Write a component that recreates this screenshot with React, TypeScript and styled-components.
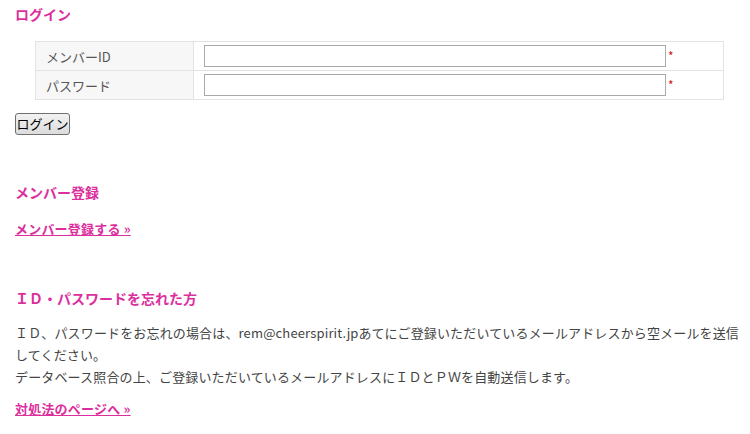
import React from 'react';
import styled, { createGlobalStyle } from 'styled-components';

const GlobalStyle = createGlobalStyle`
  body {
    margin: 0;
    background: #ffffff;
    font-family: "Noto Sans CJK JP", "Noto Sans", sans-serif;
    color: #333333;
  }
`;

const PINK = '#dc2f9e';

const Page = styled.div`
  padding: 4px 4px 0 15px;
`;

const Heading = styled.h3<{ $top: number }>`
  margin: ${p => p.$top}px 0 0 0;
  font-size: 14px;
  line-height: 20px;
  font-weight: bold;
  color: ${PINK};
`;

const FormTable = styled.table`
  margin: 17px 0 0 20px;
  width: 689px;
  border-collapse: collapse;
  font-size: 13px;
`;

const LabelCell = styled.th`
  width: 147px;
  padding: 0 0 0 10px;
  text-align: left;
  font-weight: normal;
  color: #555555;
  background: #f7f7f7;
  border: 1px solid #e3e3e3;
`;

const FieldCell = styled.td`
  padding: 0 0 0 10px;
  border: 1px solid #e3e3e3;
`;

const Row = styled.tr`
  height: 29px;
`;

const Field = styled.div`
  display: flex;
  align-items: center;
`;

const TextInput = styled.input`
  box-sizing: border-box;
  width: 462px;
  height: 22px;
  margin: 0;
  border: 1px solid #a9a9a9;
  background: #ffffff;
`;

const Required = styled.span`
  margin-left: 2px;
  color: #d01010;
  font-size: 12px;
  line-height: 12px;
  align-self: flex-start;
  padding-top: 5px;
`;

const LoginButton = styled.button`
  display: block;
  margin: 13px 0 0 0;
  box-sizing: border-box;
  width: 55px;
  height: 22px;
  padding: 0;
  font-family: "Noto Sans CJK JP", sans-serif;
  font-size: 13px;
  line-height: 18px;
  color: #000000;
  background: linear-gradient(#f2f2f2, #dcdcdc);
  border: 1px solid #707070;
  border-radius: 3px;
`;

const MoreLink = styled.a<{ $top: number }>`
  display: block;
  width: fit-content;
  margin-top: ${p => p.$top}px;
  font-size: 13px;
  line-height: 20px;
  font-weight: bold;
  letter-spacing: 0.2px;
  color: ${PINK};
  text-decoration: underline;
`;

const Para = styled.p`
  margin: 14px 0 0 0;
  font-size: 13px;
  line-height: 22px;
  letter-spacing: 0.15px;
  color: #444444;
`;

const App: React.FC = () => {
  return (
    <>
      <GlobalStyle />
      <Page>
        <Heading $top={0}>ログイン</Heading>
        <FormTable>
          <tbody>
            <Row>
              <LabelCell>メンバーID</LabelCell>
              <FieldCell>
                <Field>
                  <TextInput type="text" />
                  <Required>*</Required>
                </Field>
              </FieldCell>
            </Row>
            <Row>
              <LabelCell>パスワード</LabelCell>
              <FieldCell>
                <Field>
                  <TextInput type="password" />
                  <Required>*</Required>
                </Field>
              </FieldCell>
            </Row>
          </tbody>
        </FormTable>
        <LoginButton>ログイン</LoginButton>

        <Heading $top={47}>メンバー登録</Heading>
        <MoreLink $top={17} href="#">メンバー登録する »</MoreLink>

        <Heading $top={49}>ＩＤ・パスワードを忘れた方</Heading>
        <Para>
          ＩＤ、パスワードをお忘れの場合は、rem@cheerspirit.jpあてにご登録いただいているメールアドレスから空メールを送信してください。
          <br />
          データベース照合の上、ご登録いただいているメールアドレスにＩＤとＰＷを自動送信します。
        </Para>
        <MoreLink $top={11} href="#">対処法のページへ »</MoreLink>
      </Page>
    </>
  );
};

export default App;
